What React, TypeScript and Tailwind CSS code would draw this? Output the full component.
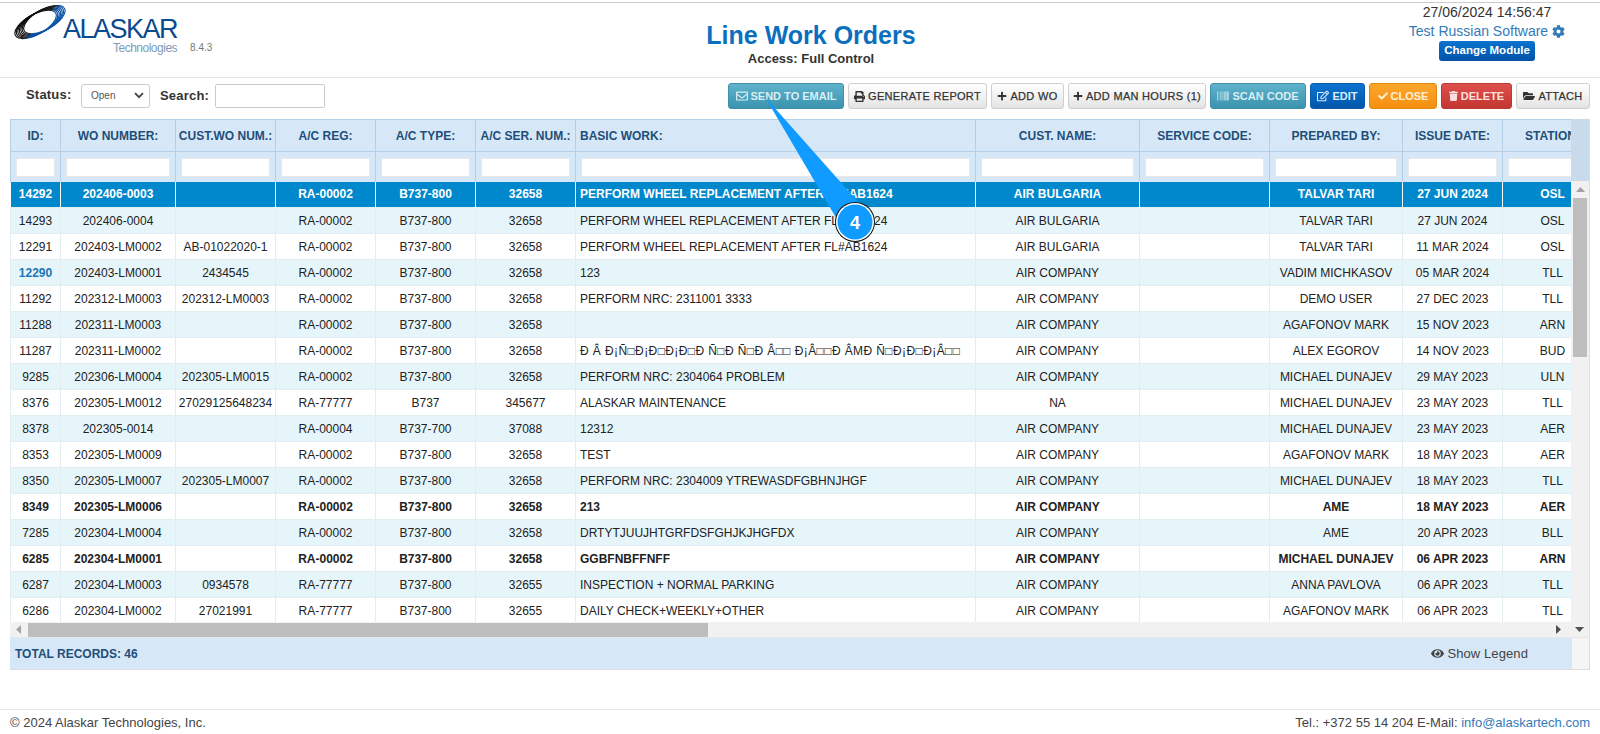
import React from "react";
import { FaRegEnvelope, FaPrint, FaPlus, FaBarcode, FaRegEdit, FaCheck, FaTrash, FaFolderOpen, FaCog, FaEye } from "react-icons/fa";

const cols = [50, 115, 100, 100, 100, 100, 400, 164, 130, 133, 100, 100];
const heads = ["ID:", "WO NUMBER:", "CUST.WO NUM.:", "A/C REG:", "A/C TYPE:", "A/C SER. NUM.:", "BASIC WORK:", "CUST. NAME:", "SERVICE CODE:", "PREPARED BY:", "ISSUE DATE:", "STATION:"];
const garbled = "Ð Â Ð¡Ñ□Ð¡Ð□Ð¡Ð□Ð Ñ□Ð Ñ□Ð Â□□ Ð¡Â□□Ð ÂMÐ Ñ□Ð¡Ð□Ð¡Â□□";
type R = { c: string[]; b?: boolean; s?: boolean };
const rows: R[] = [
  { s: true, c: ["14292", "202406-0003", "", "RA-00002", "B737-800", "32658", "PERFORM WHEEL REPLACEMENT AFTER FL#AB1624", "AIR BULGARIA", "", "TALVAR TARI", "27 JUN 2024", "OSL"] },
  { c: ["14293", "202406-0004", "", "RA-00002", "B737-800", "32658", "PERFORM WHEEL REPLACEMENT AFTER FL#AB1624", "AIR BULGARIA", "", "TALVAR TARI", "27 JUN 2024", "OSL"] },
  { c: ["12291", "202403-LM0002", "AB-01022020-1", "RA-00002", "B737-800", "32658", "PERFORM WHEEL REPLACEMENT AFTER FL#AB1624", "AIR BULGARIA", "", "TALVAR TARI", "11 MAR 2024", "OSL"] },
  { c: ["12290", "202403-LM0001", "2434545", "RA-00002", "B737-800", "32658", "123", "AIR COMPANY", "", "VADIM MICHKASOV", "05 MAR 2024", "TLL"] },
  { c: ["11292", "202312-LM0003", "202312-LM0003", "RA-00002", "B737-800", "32658", "PERFORM NRC: 2311001 3333", "AIR COMPANY", "", "DEMO USER", "27 DEC 2023", "TLL"] },
  { c: ["11288", "202311-LM0003", "", "RA-00002", "B737-800", "32658", "", "AIR COMPANY", "", "AGAFONOV MARK", "15 NOV 2023", "ARN"] },
  { c: ["11287", "202311-LM0002", "", "RA-00002", "B737-800", "32658", garbled, "AIR COMPANY", "", "ALEX EGOROV", "14 NOV 2023", "BUD"] },
  { c: ["9285", "202306-LM0004", "202305-LM0015", "RA-00002", "B737-800", "32658", "PERFORM NRC: 2304064 PROBLEM", "AIR COMPANY", "", "MICHAEL DUNAJEV", "29 MAY 2023", "ULN"] },
  { c: ["8376", "202305-LM0012", "27029125648234", "RA-77777", "B737", "345677", "ALASKAR MAINTENANCE", "NA", "", "MICHAEL DUNAJEV", "23 MAY 2023", "TLL"] },
  { c: ["8378", "202305-0014", "", "RA-00004", "B737-700", "37088", "12312", "AIR COMPANY", "", "MICHAEL DUNAJEV", "23 MAY 2023", "AER"] },
  { c: ["8353", "202305-LM0009", "", "RA-00002", "B737-800", "32658", "TEST", "AIR COMPANY", "", "AGAFONOV MARK", "18 MAY 2023", "AER"] },
  { c: ["8350", "202305-LM0007", "202305-LM0007", "RA-00002", "B737-800", "32658", "PERFORM NRC: 2304009 YTREWASDFGBHNJHGF", "AIR COMPANY", "", "MICHAEL DUNAJEV", "18 MAY 2023", "TLL"] },
  { b: true, c: ["8349", "202305-LM0006", "", "RA-00002", "B737-800", "32658", "213", "AIR COMPANY", "", "AME", "18 MAY 2023", "AER"] },
  { c: ["7285", "202304-LM0004", "", "RA-00002", "B737-800", "32658", "DRTYTJUUJHTGRFDSFGHJKJHGFDX", "AIR COMPANY", "", "AME", "20 APR 2023", "BLL"] },
  { b: true, c: ["6285", "202304-LM0001", "", "RA-00002", "B737-800", "32658", "GGBFNBFFNFF", "AIR COMPANY", "", "MICHAEL DUNAJEV", "06 APR 2023", "ARN"] },
  { c: ["6287", "202304-LM0003", "0934578", "RA-77777", "B737-800", "32655", "INSPECTION + NORMAL PARKING", "AIR COMPANY", "", "ANNA PAVLOVA", "06 APR 2023", "TLL"] },
  { c: ["6286", "202304-LM0002", "27021991", "RA-77777", "B737-800", "32655", "DAILY CHECK+WEEKLY+OTHER", "AIR COMPANY", "", "AGAFONOV MARK", "06 APR 2023", "TLL"] },
];

const neutral = "border-[#cfcfcf] bg-gradient-to-b from-[#ffffff] to-[#e4e4e4] text-[#333333] font-normal tracking-[0.3px] [-webkit-text-stroke:0.25px_#333333]";
const teal = "border-[#3f8fa8] bg-gradient-to-b from-[#5fb3cc] to-[#3a93ae] text-[#d9eef4] font-bold";

function Btn({ w, cls, icon, children }: { w: string; cls: string; icon: React.ReactNode; children: React.ReactNode }) {
  return (
    <div className={`${w} ${cls} h-[26px] flex items-center justify-center gap-[3px] rounded-[3px] border text-[11px] shrink-0`}>
      {icon}
      <span>{children}</span>
    </div>
  );
}

function Logo() {
  const rings = [-5, -3.33, -1.67, 0, 1.67, 3.33, 5];
  return (
    <svg width="56" height="36" viewBox="0 0 56 36" className="block">
      <defs>
        <linearGradient id="lg" gradientUnits="userSpaceOnUse" x1="20" y1="6" x2="27" y2="28">
          <stop offset="0" stopColor="#0b0b0b" />
          <stop offset="0.5" stopColor="#1c1c1c" />
          <stop offset="0.66" stopColor="#0a4ea0" />
          <stop offset="1" stopColor="#0a55a8" />
        </linearGradient>
      </defs>
      <g transform="rotate(-29 26 17)">
        {rings.map((d) => (
          <ellipse key={d} cx={26 + d} cy={17} rx={23} ry={10} fill="none" stroke="url(#lg)" strokeWidth="1.15" />
        ))}
      </g>
    </svg>
  );
}

export default function App() {
  return (
    <div className="relative w-[1600px] h-[734px] bg-white overflow-hidden font-['Liberation_Sans',Arial,sans-serif] text-[#333333]">
      <div className="h-[2px] bg-white" />
      <div className="h-[1px] bg-[#cccccc]" />
      {/* Header */}
      <header className="h-[75px] border-b border-[#e5e5e5] flex justify-between relative">
        <div className="w-[360px] pl-[14px] pt-[2px] flex items-start">
          <Logo />
          <div className="relative -ml-[7px] mt-[10px] w-[150px]">
            <div className="text-[27px] leading-[28px] text-[#0a4a8f] tracking-[-1.5px]">ALASKAR</div>
            <div className="flex items-center -mt-[2px]">
              <span className="ml-[50px] text-[12px] leading-[14px] text-[#7f9bb8] tracking-[-0.5px]">Technologies</span>
              <span className="ml-[13px] text-[10px] leading-[14px] text-[#777777]">8.4.3</span>
            </div>
          </div>
        </div>
        <div className="flex flex-col items-center pt-[17px] -ml-[112px]">
          <div className="text-[25px] leading-[30px] font-bold text-[#0b6fc0]">Line Work Orders</div>
          <div className="text-[13px] leading-[14px] mt-[2px] font-bold text-[#333333]">Access: Full Control</div>
        </div>
        <div className="w-[226px] flex flex-col items-center">
          <div className="text-[14px] leading-[18px] text-[#333333]">27/06/2024 14:56:47</div>
          <div className="text-[14px] leading-[18px] mt-[1px] text-[#337ab7] flex items-center gap-[4px]">
            Test Russian Software <FaCog className="w-[13px] h-[13px]" />
          </div>
          <div className="mt-[1px] w-[96px] h-[20px] rounded-[3px] bg-gradient-to-b from-[#0b74d0] to-[#0352a8] text-white text-[11.5px] font-bold flex items-center justify-center">Change Module</div>
        </div>
      </header>

      {/* Toolbar */}
      <div className="h-[41px] pt-[5px] flex items-start">
        <div className="flex items-center w-[728px] text-[13px] font-bold">
          <span className="ml-[26px] w-[55px] tracking-[0.2px] -mt-[2px]">Status:</span>
          <div className="w-[69px] h-[24px] border border-[#cccccc] rounded-[3px] flex items-center justify-between pl-[9px] pr-[5px] bg-white">
            <span className="text-[10px] font-normal text-[#555555]">Open</span>
            <svg width="10" height="7" viewBox="0 0 10 7"><path d="M1 1.2 L5 5.2 L9 1.2" fill="none" stroke="#444444" strokeWidth="1.8" /></svg>
          </div>
          <span className="ml-[10px] w-[55px] tracking-[0.2px]">Search:</span>
          <div className="w-[110px] h-[24px] mt-[1px] border border-[#cccccc] rounded-[2px] bg-white" />
        </div>
        <div className="flex gap-[4px]">
          <Btn w="w-[116px]" cls={teal} icon={<FaRegEnvelope className="w-[12px] h-[12px]" />}>SEND TO EMAIL</Btn>
          <Btn w="w-[139px]" cls={neutral} icon={<FaPrint className="w-[11px] h-[11px]" />}>GENERATE REPORT</Btn>
          <Btn w="w-[73px]" cls={neutral} icon={<FaPlus className="w-[10px] h-[10px]" />}>ADD WO</Btn>
          <Btn w="w-[138px]" cls={neutral} icon={<FaPlus className="w-[10px] h-[10px]" />}>ADD MAN HOURS (1)</Btn>
          <Btn w="w-[96px]" cls={teal} icon={<FaBarcode className="w-[12px] h-[12px]" />}>SCAN CODE</Btn>
          <Btn w="w-[55px]" cls="border-[#0a5ca8] bg-gradient-to-b from-[#0b74d0] to-[#0456ab] text-[#dcecfa] font-bold" icon={<FaRegEdit className="w-[12px] h-[12px]" />}>EDIT</Btn>
          <Btn w="w-[68px]" cls="border-[#e08a10] bg-gradient-to-b from-[#fba72c] to-[#f58f0e] text-[#fff0d8] font-bold" icon={<FaCheck className="w-[10px] h-[10px]" />}>CLOSE</Btn>
          <Btn w="w-[71px]" cls="border-[#b83a36] bg-gradient-to-b from-[#de504b] to-[#c23531] text-[#fbe0df] font-bold" icon={<FaTrash className="w-[9px] h-[10px]" />}>DELETE</Btn>
          <Btn w="w-[74px]" cls={neutral} icon={<FaFolderOpen className="w-[12px] h-[12px]" />}>ATTACH</Btn>
        </div>
      </div>

      {/* Grid */}
      <div className="ml-[10px] w-[1580px] border-b border-r border-[#dddddd]">
        <div className="flex h-[503px] overflow-hidden">
          <div className="w-[1562px] overflow-hidden">
            <table className="table-fixed border-collapse w-[1592px] text-[12px] leading-[14px] text-[#222222]">
              <colgroup>
                {cols.map((w, i) => <col key={i} style={{ width: w }} />)}
              </colgroup>
              <thead>
                <tr className="h-[32px] bg-[#d6e8f7] text-[#1f4e79]">
                  {heads.map((h, j) => (
                    <th key={h} className={`p-0 border border-[#b5cfe6] font-bold whitespace-nowrap overflow-hidden ${j === 6 ? "text-left pl-[4px]" : "text-center"}`}>{h}</th>
                  ))}
                </tr>
                <tr className="h-[30px] bg-[#d6e8f7]">
                  {heads.map((h) => (
                    <th key={h} className="p-0 border-x border-[#b5cfe6] font-normal">
                      <div className="mx-[5px] mt-[1px] h-[19px] bg-white border border-[#e8e8e8]" />
                    </th>
                  ))}
                </tr>
              </thead>
              <tbody>
                {rows.map((r, i) => (
                  <tr key={i} className={`h-[26px] ${r.s ? "bg-[#0088cc] text-white font-bold" : i % 2 === 1 ? "bg-[#e6f5f9]" : "bg-white"} ${r.b ? "font-bold" : ""}`}>
                    {r.c.map((t, j) => (
                      <td key={j} className={`p-0 border ${r.s ? "border-white border-y-0" : "border-[#e3eef3]"} whitespace-nowrap overflow-hidden ${j === 6 ? "text-left pl-[4px]" : "text-center"} ${t === "12290" ? "text-[#1c75b8] font-bold" : ""} ${t === garbled ? "tracking-[0.4px]" : ""}`}>{t}</td>
                    ))}
                  </tr>
                ))}
              </tbody>
            </table>
          </div>
          {/* Vertical scrollbar */}
          <div className="w-[18px] flex flex-col">
            <div className="h-[62px] bg-[#c9dbea]" />
            <div className="flex-1 bg-[#f1f1f1] flex flex-col items-center pt-[6px]">
              <svg width="9" height="5" viewBox="0 0 9 5"><path d="M0 5 L4.5 0 L9 5 Z" fill="#a3a3a3" /></svg>
              <div className="mt-[6px] w-[14px] h-[159px] bg-[#bdbdbd]" />
            </div>
          </div>
        </div>
        {/* Horizontal scrollbar */}
        <div className="h-[16px] bg-[#f1f1f1] flex items-center border-b border-[#e8e8e8]">
          <svg width="5" height="9" viewBox="0 0 5 9" className="ml-[6px]"><path d="M5 0 L0 4.5 L5 9 Z" fill="#a3a3a3" /></svg>
          <div className="ml-[7px] w-[680px] h-[14px] bg-[#bdbdbd]" />
          <div className="flex-1" />
          <svg width="5" height="9" viewBox="0 0 5 9" className="mr-[14px]"><path d="M0 0 L5 4.5 L0 9 Z" fill="#505050" /></svg>
          <svg width="9" height="5" viewBox="0 0 9 5" className="mr-[5px]"><path d="M0 0 L9 0 L4.5 5 Z" fill="#505050" /></svg>
        </div>
        {/* Footer */}
        <div className="h-[31px] flex">
          <div className="w-[1562px] bg-[#d6e8f7] flex items-center justify-between pl-[5px] pr-[44px]">
            <span className="text-[12px] font-bold text-[#1f4e79]">TOTAL RECORDS: 46</span>
            <span className="flex items-center gap-[3px] text-[13px] tracking-[0.1px] text-[#444444]"><FaEye className="w-[13px] h-[13px]" /> Show Legend</span>
          </div>
          <div className="flex-1 bg-[#f5f5f5]" />
        </div>
      </div>

      {/* Page footer */}
      <footer className="mt-[39px] h-[26px] border-t border-[#e8e8e8] flex items-center justify-between pl-[10px] pr-[10px] text-[13px] text-[#444444]">
        <span>© 2024 Alaskar Technologies, Inc.</span>
        <span>Tel.: +372 55 14 204 E-Mail: <span className="text-[#337ab7]">info@alaskartech.com</span></span>
      </footer>

      {/* Callout overlay */}
      <svg className="absolute left-0 top-0 pointer-events-none" width="1600" height="734" viewBox="0 0 1600 734">
        <path d="M765 97 L838 221 L860 204 Z" fill="#0f9bff" />
        <circle cx="855" cy="222" r="20" fill="#111111" />
        <circle cx="855" cy="222" r="19" fill="#ffffff" />
        <circle cx="855" cy="222" r="17.5" fill="#0f9bff" />
      </svg>
      <div className="absolute left-[835px] top-[213px] w-[40px] h-[20px] flex items-center justify-center text-white text-[18px] font-bold">4</div>
    </div>
  );
}
